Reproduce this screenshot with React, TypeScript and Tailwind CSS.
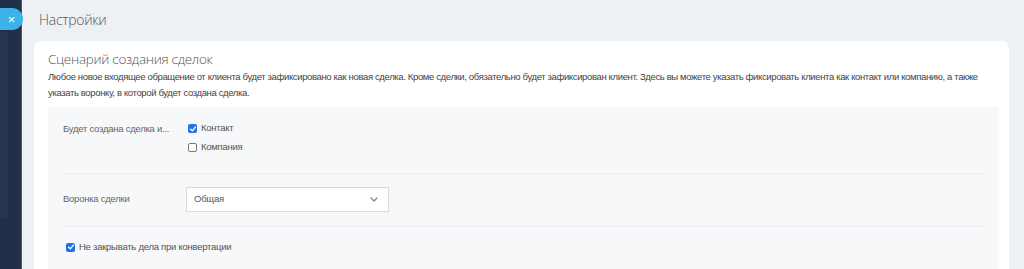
import React from "react";

function Check({ checked }: { checked: boolean }) {
  if (checked) {
    return (
      <span className="flex h-[9px] w-[9px] shrink-0 items-center justify-center rounded-[2px] bg-[#1f75e8]">
        <svg viewBox="0 0 10 10" className="h-[8px] w-[8px]">
          <path d="M2 5.2 L4.2 7.3 L8 2.6" fill="none" stroke="#fff" strokeWidth="1.7" strokeLinecap="round" strokeLinejoin="round" />
        </svg>
      </span>
    );
  }
  return <span className="h-[9px] w-[9px] shrink-0 rounded-[2px] border border-[#777] bg-white" />;
}

export default function App() {
  const body = { fontFamily: '"Liberation Sans", Arial, sans-serif', letterSpacing: "-0.25px" };
  const head = { fontFamily: '"Open Sans", "Noto Sans", sans-serif', letterSpacing: "-0.3px" };
  return (
    <div className="flex h-[269px] w-[1024px] overflow-hidden bg-[#eef1f4]" style={body}>
      <aside className="relative w-[22px] shrink-0 border-r border-[#4d5b6e] bg-[#213049]">
        <div className="mt-[8px] flex h-[22px] w-[23px] items-center justify-center rounded-r-full bg-[#3bb3e8] text-[13px] leading-none text-white">
          ×
        </div>
        <div className="mt-[2px] h-[186px] w-[8px] rounded-r-[4px] bg-[#26364f]" />
      </aside>
      <main className="flex-1 pr-[15px] pl-[12px]">
        <h1 className="pt-[9px] pl-[5px] text-[14px] font-light leading-[21px] text-[#555]" style={head}>
          Настройки
        </h1>
        <section className="mt-[11px] rounded-t-[7px] bg-white pr-[10px] pl-[14px] pt-[8px]">
          <h2 className="text-[13.5px] font-light leading-[20px] text-[#555]" style={head}>
            Сценарий создания сделок
          </h2>
          <p className="text-[9.5px] leading-[16px] tracking-[-0.36px] text-[#444]">
            Любое новое входящее обращение от клиента будет зафиксировано как новая сделка. Кроме сделки, обязательно будет зафиксирован клиент. Здесь вы можете указать фиксировать клиента как контакт или компанию, а также указать воронку, в которой будет создана сделка.
          </p>
          <div className="mt-[6px] bg-[#f7f8fa] pr-[16px] pl-[15px]">
            <div className="flex border-b border-[#e9ebee] pt-[12px] pb-[16px] text-[9.5px] text-[#555]">
              <div className="w-[125px] leading-[19px] text-[#666]">Будет создана сделка и...</div>
              <div className="flex flex-col">
                <label className="flex h-[19px] items-center gap-[4px]">
                  <Check checked />
                  <span>Контакт</span>
                </label>
                <label className="flex h-[19px] items-center gap-[4px]">
                  <Check checked={false} />
                  <span>Компания</span>
                </label>
              </div>
            </div>
            <div className="flex items-center border-b border-[#e9ebee] pt-[13px] pb-[14px] text-[9.5px]">
              <div className="w-[123px] text-[#666]">Воронка сделки</div>
              <div className="flex h-[25px] w-[203px] items-center justify-between border border-[#d9dbde] bg-white pr-[10px] pl-[7px] text-[#555]">
                <span>Общая</span>
                <svg viewBox="0 0 8 5" className="h-[5px] w-[8px]">
                  <path d="M1 1 L4 4 L7 1" fill="none" stroke="#80858c" strokeWidth="1.3" strokeLinecap="round" strokeLinejoin="round" />
                </svg>
              </div>
            </div>
            <div className="flex items-center gap-[4px] pt-[12px] pb-[14px] pl-[3px] text-[9.5px] leading-[16px] text-[#555]">
              <Check checked />
              <span>Не закрывать дела при конвертации</span>
            </div>
          </div>
        </section>
      </main>
    </div>
  );
}
